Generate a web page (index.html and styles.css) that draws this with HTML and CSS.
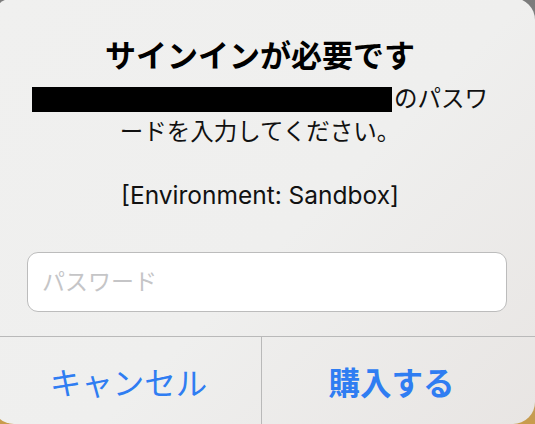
FILE: index.html
```html
<!DOCTYPE html>
<html lang="ja">
  <head>
    <meta charset="utf-8">
    <title>サインインが必要です</title>
    <link rel="stylesheet" href="styles.css">
  </head>
  <body>
    <div class="alert">
      <div class="alert-body">
        <div class="title">サインインが必要です</div>
        <div class="message"><span class="redact"></span>のパスワ<br>ードを入力してください。</div>
        <div class="env">[Environment: Sandbox]</div>
        <div class="field">パスワード</div>
      </div>
      <div class="buttons">
        <div class="btn btn-cancel">キャンセル</div>
        <div class="btn btn-main">購入する</div>
      </div>
    </div>
  </body>
</html>
```

FILE: styles.css
```css
html, body {
  margin: 0;
  height: 100%;
}
body {
  background: linear-gradient(to bottom, #7c7c7c 0%, #9a9a9a 70%, #c99c4c 100%);
  font-family: "Inter", "Noto Sans CJK JP", sans-serif;
  color: #000;
  overflow: hidden;
}
.alert {
  width: 543px;
  height: 426px;
  margin: -2px 0 0 -8px;
  border-radius: 22px;
  background: linear-gradient(135deg, #f0f0ef 0%, #efefee 55%, #e8e5e3 100%);
  display: flex;
  flex-direction: column;
  overflow: hidden;
}
.alert-body {
  padding: 40px 28px 24px 35px;
  text-align: center;
  border-bottom: 1px solid #b9b9b9;
}
.title, .message, .env {
  margin-right: 14px;
}
.title {
  font-size: 31px;
  line-height: 36px;
  font-weight: bold;
}
.message {
  margin-top: 8px;
  font-size: 23.5px;
  line-height: 33px;
  color: #111;
}
.redact {
  display: inline-block;
  width: 360px;
  height: 25px;
  background: #000;
  vertical-align: -5px;
  margin-right: 2px;
}
.env {
  margin-top: 31px;
  font-size: 24.5px;
  line-height: 33px;
  color: #111;
}
.field {
  margin-top: 40px;
  height: 58px;
  border: 1px solid #bcbcbc;
  border-radius: 11px;
  background: #fff;
  text-align: left;
  padding-left: 14px;
  font-size: 23px;
  line-height: 58px;
  color: #c5c5c7;
}
.buttons {
  flex: 1;
  display: flex;
}
.btn {
  display: flex;
  align-items: center;
  justify-content: center;
  font-size: 31.5px;
  color: #2f7df2;
}
.btn-cancel {
  width: 269px;
  padding-left: 4px;
  box-sizing: border-box;
}
.btn-main {
  flex: 1;
  border-left: 1px solid #b9b9b9;
  padding-right: 14px;
  font-weight: bold;
}
```
